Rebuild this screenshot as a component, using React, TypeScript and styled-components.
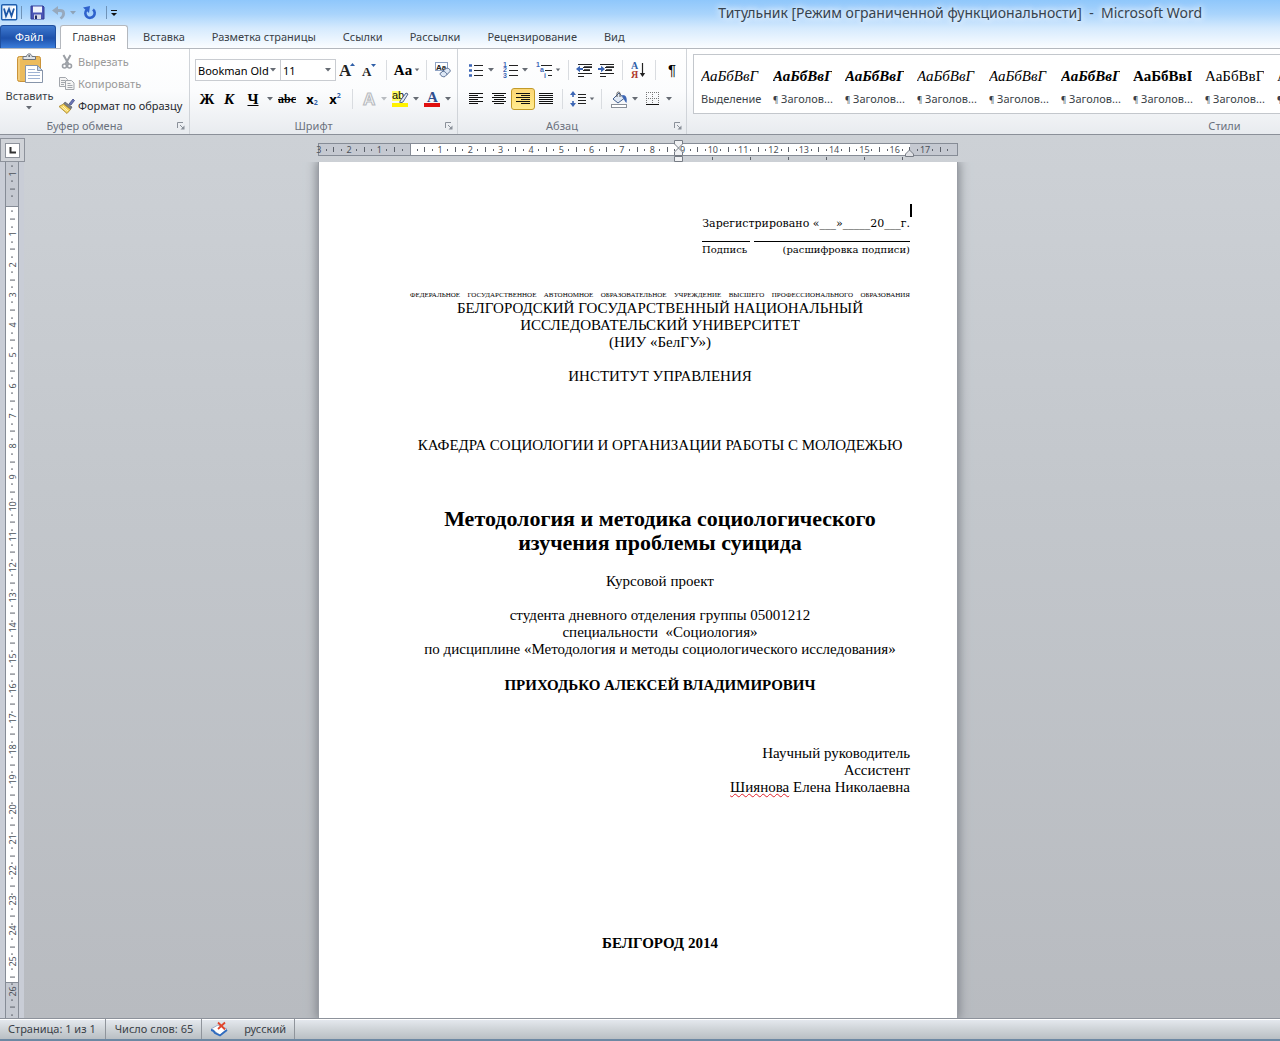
import React from 'react';
import styled, { createGlobalStyle, css } from 'styled-components';

const ui = '"Noto Sans", "Open Sans", sans-serif';
const serif = '"Liberation Serif", "Times New Roman", serif';
const wideSerif = '"DejaVu Serif", serif';

const GlobalStyle = createGlobalStyle`
  *, *::before, *::after { box-sizing: border-box; }
  body { margin: 0; background: #b9bcc1; font-family: ${ui}; font-size: 11px; color: #3a3f47; }
  button, select { font: inherit; color: inherit; margin: 0; padding: 0; border: 0; background: none; }
  p, h1, h2 { margin: 0; font-weight: normal; }
`;

const Window = styled.div`
  display: flex;
  flex-direction: column;
  height: 100vh;
  overflow: hidden;
`;

/* ---------- Title bar and tabs ---------- */

const Header = styled.header`
  background: linear-gradient(#8fc7fb 0, #a9d4fc 14px, #d5eafd 28px, #fbfdff 48px);
`;

const TitleBar = styled.div`
  display: flex;
  align-items: center;
  height: 25px;
`;

const QuickAccess = styled.div`
  display: flex;
  align-items: center;
  height: 22px;
  padding-left: 1px;
`;

const QuickButton = styled.button<{ $w: number }>`
  display: flex;
  align-items: center;
  justify-content: center;
  width: ${(p) => p.$w}px;
  height: 20px;
`;

const QuickDivider = styled.span`
  width: 1px;
  height: 13px;
  margin: 0 3px;
  background: #6f93b8;
`;

const WindowTitle = styled.h1`
  margin-left: auto;
  margin-right: 78px;
  font-size: 14px;
  line-height: 25px;
  color: #36434f;
  white-space: pre;
  text-shadow: 0 0 6px #fff, 0 0 8px #fff;
`;

const Tabs = styled.nav`
  display: flex;
  align-items: flex-end;
  height: 24px;
  border-bottom: 1px solid #b4b8be;
`;

const Tab = styled.button<{ $kind?: 'file' | 'active' }>`
  height: 23px;
  padding: 0 13px 0 14px;
  line-height: 22px;
  white-space: nowrap;
  ${(p) =>
    p.$kind === 'file' &&
    css`
      width: 56px;
      margin-right: 4px;
      color: #fff;
      border: 1px solid #1f4f9f;
      border-bottom: 0;
      border-radius: 3px 3px 0 0;
      background: linear-gradient(#3f7ad0, #1d51ab 55%, #3b7ddb);
    `}
  ${(p) =>
    p.$kind === 'active' &&
    css`
      height: 24px;
      width: 68px;
      padding: 0 0 2px;
      margin-right: 1px;
      margin-bottom: -1px;
      border: 1px solid #b4b8be;
      border-bottom: 0;
      border-radius: 3px 3px 0 0;
      background: #fff;
    `}
`;

/* ---------- Ribbon ---------- */

const Ribbon = styled.div`
  display: flex;
  flex: none;
  height: 86px;
  overflow: hidden;
  background: linear-gradient(#fff, #fbfcfd 50%, #e8ebef);
  border-bottom: 1px solid #8b9099;
`;

const Group = styled.section<{ $w: number }>`
  display: flex;
  flex: none;
  flex-direction: column;
  width: ${(p) => p.$w}px;
  padding-top: 4px;
  border-right: 1px solid #d0d4d9;
`;

const GroupBody = styled.div<{ $row?: boolean }>`
  display: flex;
  flex: 1;
  min-height: 0;
  flex-direction: ${(p) => (p.$row ? 'row' : 'column')};
  gap: ${(p) => (p.$row ? 0 : 5)}px;
  padding-top: ${(p) => (p.$row ? 0 : 5)}px;
`;

const GroupFooter = styled.div`
  display: flex;
  flex: none;
  align-items: center;
  height: 17px;
  color: #6a717d;
`;

const GroupName = styled.h2`
  flex: 1;
  font-size: 11px;
  line-height: 16px;
  text-align: center;
`;

const Launcher = styled.button`
  display: flex;
  width: 20px;
  padding-left: 8px;
`;

const ToolRow = styled.div<{ $inset: number }>`
  display: flex;
  align-items: center;
  height: 24px;
  padding-left: ${(p) => p.$inset}px;
`;

const Tool = styled.button<{ $w?: number; $on?: boolean; $after?: number }>`
  display: flex;
  flex: none;
  align-items: center;
  justify-content: space-between;
  width: ${(p) => p.$w ?? 22}px;
  height: 24px;
  margin-right: ${(p) => p.$after ?? 0}px;
  color: #000;
  ${(p) =>
    p.$on &&
    css`
      height: 22px;
      border: 1px solid #c29b29;
      border-radius: 3px;
      background: linear-gradient(#fbd677, #ffe37e 60%, #ffeb94);
    `}
`;

const Glyph = styled.span`
  display: flex;
  flex: 1 0 22px;
  max-width: 26px;
  align-items: center;
  justify-content: center;
`;

const ToolDivider = styled.span<{ $w: number }>`
  flex: none;
  width: ${(p) => p.$w}px;
  height: 20px;
  background: linear-gradient(#d9dce0, #d9dce0) center / 1px 100% no-repeat;
`;

const Letter = styled.span<{ $italic?: boolean; $line?: string; $size?: number }>`
  font-family: ${serif};
  font-weight: bold;
  font-size: ${(p) => p.$size ?? 15}px;
  line-height: 16px;
  font-style: ${(p) => (p.$italic ? 'italic' : 'normal')};
  text-decoration: ${(p) => p.$line ?? 'none'};
`;

const Pilcrow = styled.span`
  font-family: "Liberation Sans", sans-serif;
  font-size: 15px;
  line-height: 16px;
`;

const Script = styled.span<{ $up?: boolean }>`
  display: flex;
  align-items: ${(p) => (p.$up ? 'flex-start' : 'flex-end')};
  height: 14px;
  font-weight: bold;
  font-size: 13px;
  line-height: 14px;

  small {
    font-size: 7px;
    line-height: 7px;
    color: #2f5fa8;
  }
`;

const Combo = styled.label<{ $w: number }>`
  display: flex;
  align-items: center;
  width: ${(p) => p.$w}px;
  height: 22px;
  padding-right: 3px;
  border: 1px solid #c9ccd1;
  background: #fff;
  color: #000;

  & + & { border-left: 0; }

  select {
    flex: 1;
    min-width: 0;
    height: 20px;
    padding-left: 2px;
    appearance: none;
    text-overflow: clip;
    outline: 0;
  }
`;

const PasteButton = styled.button`
  display: flex;
  flex-direction: column;
  align-items: center;
  width: 59px;
  line-height: 15px;
  gap: 4px;
`;

const PasteLabel = styled.span`
  display: flex;
  flex-direction: column;
  align-items: center;
  gap: 3px;
`;

const ClipList = styled.div`
  display: flex;
  flex-direction: column;
`;

const ClipButton = styled.button<{ $dim?: boolean }>`
  display: flex;
  flex: none;
  align-items: center;
  gap: 3px;
  height: 22px;
  padding-bottom: 5px;
  white-space: nowrap;
  color: ${(p) => (p.$dim ? '#9a9a9a' : '#26292e')};
`;

const Gallery = styled.div`
  display: flex;
  height: 60px;
  margin: 1px 0 0 6px;
  border: 1px solid #c3c7cc;
  background: #fff;
`;

const StyleCard = styled.button`
  display: flex;
  flex: none;
  flex-direction: column;
  width: 72px;
  padding: 11px 6px 0 7px;
  text-align: left;
`;

const StyleSample = styled.span<{ $bold?: boolean; $italic?: boolean }>`
  width: 59px;
  overflow: hidden;
  white-space: nowrap;
  font-family: ${serif};
  font-size: 15px;
  line-height: 20px;
  font-weight: ${(p) => (p.$bold ? 'bold' : 'normal')};
  font-style: ${(p) => (p.$italic ? 'italic' : 'normal')};
  color: #000;
`;

const StyleName = styled.span`
  padding-top: 5px;
  line-height: 16px;
  white-space: nowrap;

  small { font-size: 8px; }
`;

/* ---------- Workspace ---------- */

const Workspace = styled.main`
  display: grid;
  flex: 1;
  min-height: 0;
  grid-template-columns: 26px 1fr 30px;
  grid-template-rows: 27px 1fr;
  overflow: hidden;
  background: linear-gradient(to right, #c9cdd6 24px, transparent 24px),
    linear-gradient(#cdd1d6, #c3c7cc 40%, #b8bbc0);
`;

const Corner = styled.div`
  padding-top: 3px;
`;

const TabStop = styled.button`
  display: flex;
  align-items: center;
  justify-content: center;
  width: 25px;
  height: 24px;
  border: 1px solid #8d929b;
  background: #d0d3d8;

  span {
    display: flex;
    align-items: center;
    justify-content: center;
    width: 15px;
    height: 15px;
    border: 1px solid #8d929b;
    background: #fff;
  }
`;

const RulerLane = styled.div`
  display: flex;
  justify-content: center;
  padding-top: 8px;
`;

const HRuler = styled.div`
  position: relative;
  display: flex;
  width: 640px;
  height: 13px;
  border: 1px solid #868c96;
  background: linear-gradient(to right, #c5c9d1 91px, #868c96 91px, #868c96 92px, #fff 92px, #fff 591px, #c5c9d1 591px);
`;

const HMarks = styled.div`
  display: flex;
  flex: 1;
  align-items: center;
  margin: 0 5px 0 -4px;
`;

const VRuler = styled.div`
  display: flex;
  width: 14px;
  height: 100%;
  margin-left: 5px;
  border: solid #868c96;
  border-width: 0 1px;
  background: linear-gradient(#c5c9d1 44px, #868c96 44px, #868c96 45px, #fff 45px, #fff 820px, #868c96 820px, #868c96 821px, #c5c9d1 821px);
`;

const VMarks = styled.div`
  display: flex;
  flex: 1;
  flex-direction: column;
  align-items: center;
`;

const Mark = styled.span<{ $vertical?: boolean }>`
  display: flex;
  flex: 1 1 0;
  min-width: 0;
  min-height: 0;
  align-items: center;
  justify-content: center;
  font-size: 9px;
  line-height: 11px;
  color: #4d525a;
  ${(p) => p.$vertical && css`
    writing-mode: vertical-rl;
    transform: rotate(180deg);
  `}
`;

const Tick = styled.i<{ $long?: boolean; $vertical?: boolean }>`
  flex: none;
  background: #5d626b;
  width: ${(p) => (p.$vertical ? (p.$long ? 5 : 2) : 1)}px;
  height: ${(p) => (p.$vertical ? 1 : p.$long ? 5 : 2)}px;
`;

const IndentMark = styled.svg<{ $left: number; $top: number }>`
  position: absolute;
  left: ${(p) => p.$left}px;
  top: ${(p) => p.$top}px;
`;

const DefaultStops = styled.div`
  position: absolute;
  left: 393px;
  top: 13px;
  display: flex;
  gap: 37px;

  i { width: 1px; height: 3px; background: #5d626b; }
`;

const PageLane = styled.div`
  display: flex;
  justify-content: center;
  overflow: hidden;
`;

const Page = styled.article`
  width: 638px;
  padding: 42px 47px 0 91px;
  background: #fff;
  box-shadow: 0 0 0 1px #9a9ea5, 0 0 10px 2px #7c8087;
  font-family: ${serif};
  font-size: 15px;
  line-height: 17px;
  color: #000;
  text-align: center;
`;

const Registration = styled.div`
  display: flex;
  flex-direction: column;
  align-items: flex-end;
  font-family: ${wideSerif};
  font-size: 11px;
  line-height: 14px;
`;

const Caret = styled.span`
  width: 2px;
  height: 13px;
  margin-right: -2px;
  background: #000;
`;

const SignatureTable = styled.div`
  display: grid;
  grid-template-columns: 48px 156px;
  column-gap: 4px;
  font-size: 10px;
  line-height: 13px;
`;

const SignatureCell = styled.span<{ $end?: boolean }>`
  display: flex;
  justify-content: ${(p) => (p.$end ? 'flex-end' : 'flex-start')};
  margin-top: 10px;
  border-top: 1px solid #000;
  padding-top: 1px;
  white-space: nowrap;
`;

const Ministry = styled.p`
  margin-top: 35px;
  font-size: 7px;
  line-height: 9px;
  text-align-last: justify;
  white-space: nowrap;
`;

const Para = styled.p<{ $before?: number; $bold?: boolean; $right?: boolean }>`
  margin-top: ${(p) => p.$before ?? 0}px;
  font-weight: ${(p) => (p.$bold ? 'bold' : 'normal')};
  text-align: ${(p) => (p.$right ? 'right' : 'center')};
  white-space: pre-line;
`;

const WorkTitle = styled.h1`
  margin-top: 53px;
  font-size: 22px;
  line-height: 24px;
  font-weight: bold;
  white-space: pre-line;
`;

const Misspelled = styled.span`
  text-decoration: underline wavy #e0202a 1px;
  text-underline-offset: 1px;
`;

/* ---------- Status bar ---------- */

const StatusBar = styled.footer`
  display: flex;
  flex: none;
  height: 23px;
  border-top: 1px solid #8d929b;
  border-bottom: 2px solid #6d88a3;
  box-shadow: inset 0 1px #fff;
  background: linear-gradient(#e6eaf0, #cfd4d8 50%, #b9bfc4);
`;

const StatusItem = styled.button<{ $left: number; $right: number; $bare?: boolean }>`
  display: flex;
  align-items: center;
  padding: 0 ${(p) => p.$right}px 1px ${(p) => p.$left}px;
  border-right: ${(p) => (p.$bare ? '0' : '1px solid #8f949b')};
  white-space: nowrap;
`;

/* ---------- Icons ---------- */

const Arrow = ({ color = '#666b73' }: { color?: string }) => (
  <svg width="8" height="4" viewBox="0 0 8 4"><path d="M1 0h6L4 3.5z" fill={color} /></svg>
);

const WordLogo = () => (
  <svg width="17" height="17" viewBox="0 0 17 17">
    <rect x=".7" y=".7" width="15" height="15" rx="1" fill="#eaf3fd" stroke="#1f5fae" strokeWidth="1.400" />
    <path d="M11 2.500h4v12h-4z" fill="#fff" />
    <path d="M3 4.500l2 7.500 3-7 2.500 7 2.500-7.500" fill="none" stroke="#1c57a6" strokeWidth="1.800" />
  </svg>
);

const SaveIcon = () => (
  <svg width="15" height="15" viewBox="0 0 15 15">
    <path d="M1 1h12l1 1v12H1z" fill="#4a55b5" stroke="#323c94" />
    <rect x="3" y="1.500" width="9" height="6" fill="#eef2fb" />
    <rect x="4" y="9.500" width="7" height="4.500" fill="#d8dbe8" />
    <rect x="5" y="10.500" width="2" height="3.500" fill="#222b66" />
  </svg>
);

const UndoIcon = () => (
  <svg width="14" height="14" viewBox="0 0 14 14">
    <path d="M3 4.500h5c5 0 4.500 5 .5 8" fill="none" stroke="#97a9bd" strokeWidth="2.800" />
    <path d="M0 4.500L6 0v9z" fill="#97a9bd" />
  </svg>
);

const RedoIcon = () => (
  <svg width="14" height="14" viewBox="0 0 14 14">
    <path d="M10 3.500a4.700 4.700 0 1 1-6.500.5" fill="none" stroke="#2f62cc" strokeWidth="2.600" />
    <path d="M0 1.500L7 0 6 7z" fill="#2f62cc" />
  </svg>
);

const PasteIcon = () => (
  <svg width="28" height="31" viewBox="0 0 28 31">
    <rect x="1.500" y="3.500" width="23" height="25" rx="2" fill="#ecbb5c" stroke="#c9933a" />
    <path d="M3 27V5h8" fill="none" stroke="#f8dc9b" />
    <path d="M7 6.500V3.500h3.500c.5-3.500 5-3.500 5.500 0h3.500v3z" fill="#dfe3e8" stroke="#6c747f" />
    <circle cx="13.200" cy="3" r="1" fill="#5d6672" />
    <path d="M9.500 12.500h12l5 5v12h-17z" fill="#fff" stroke="#8795aa" />
    <path d="M21.500 12.500v5h5z" fill="#c8d8ee" stroke="#8795aa" />
    <path d="M12 16.500h7M12 19.500h12M12 22.500h12M12 25.500h12" stroke="#9fb3d3" />
  </svg>
);

const CutIcon = () => (
  <svg width="16" height="16" viewBox="0 0 16 16" fill="none" stroke="#9b9fa5">
    <path d="M4.500 1l5 9M11.500 1l-5 9" strokeWidth="2" />
    <circle cx="5.500" cy="12" r="2" strokeWidth="1.600" />
    <circle cx="10.500" cy="12" r="2" strokeWidth="1.600" />
  </svg>
);

const CopyIcon = () => (
  <svg width="16" height="16" viewBox="0 0 16 16" fill="#f4f4f4" stroke="#a2a6ac">
    <path d="M.5 1.500h6l2 2v7h-8z" />
    <path d="M2 4.500h4M2 6.500h4M2 8.500h3" />
    <path d="M6.500 4.500h6l2.500 2.500v6.500H6.500z" />
    <path d="M8.500 7.500h3M8.500 9.500h5M8.500 11.500h5" />
  </svg>
);

const BrushIcon = () => (
  <svg width="16" height="16" viewBox="0 0 16 16">
    <path d="M10 6l4-5 1.500 1.500L12 7z" fill="#6c78b8" stroke="#414a86" strokeWidth=".8" />
    <path d="M6 4L13 9l-1.500 2.500L4.500 6z" fill="#7b7f86" stroke="#4b4f55" strokeWidth=".6" />
    <path d="M4.500 6l7 5.500L8 15.500 0 8.500z" fill="#f3d25c" stroke="#a5822a" strokeWidth=".8" />
    <path d="M4 8l5 5M2.500 9l5 4" stroke="#fff3b8" />
  </svg>
);

const LauncherIcon = () => (
  <svg width="8" height="8" viewBox="0 0 8 8" fill="none" stroke="#8a9099">
    <path d="M.5 6V.5H6" />
    <path d="M3 3l3 3" />
    <path d="M7.500 3.500v4h-4z" fill="#8a9099" stroke="none" />
  </svg>
);

const ResizeFont = ({ down }: { down?: boolean }) => (
  <svg width="16" height="18" viewBox="0 0 16 18">
    <text x={down ? 1 : 0} y="15" fontFamily="Liberation Serif" fontWeight="bold" fontSize={down ? 13 : 17} fill="#222">A</text>
    <path d={down ? 'M10 3h5l-2.500 3z' : 'M11 5h5l-2.500-3z'} fill="#2f5fa8" />
  </svg>
);

const ClearFormat = () => (
  <svg width="18" height="18" viewBox="0 0 18 18">
    <rect x="1.500" y="1.500" width="12" height="8" fill="#fff" stroke="#8fa3c4" />
    <text x="2" y="9" fontFamily="Liberation Sans" fontWeight="bold" fontSize="8" fill="#222">Aa</text>
    <path d="M6 12.500l6-5c2-1 5 1 4 3l-5 5c-2 1-5-1-5-3z" fill="#dde8f6" stroke="#50688f" />
    <path d="M9 10c2 .5 3.500 2 4 3.500" fill="none" stroke="#50688f" />
  </svg>
);

const OutlineA = () => (
  <svg width="18" height="18" viewBox="0 0 18 18">
    <text x="3" y="15" fontFamily="Liberation Sans" fontWeight="bold" fontSize="17" fill="#fff" stroke="#b9bcc1" strokeWidth="1.200">A</text>
  </svg>
);

const Highlighter = () => (
  <svg width="18" height="18" viewBox="0 0 18 18">
    <rect x="1" y="1" width="9" height="10" fill="#ffff66" />
    <text x="1" y="9" fontFamily="Liberation Sans" fontSize="11" fill="#111">ab</text>
    <path d="M9 11l6-8 2 1-5 8-3 1z" fill="#dfe7f3" stroke="#3f567d" strokeWidth=".9" />
    <rect x="1" y="13" width="16" height="4" fill="#fff200" />
  </svg>
);

const FontColor = () => (
  <svg width="18" height="18" viewBox="0 0 18 18">
    <text x="4" y="12" fontFamily="Liberation Serif" fontWeight="bold" fontSize="15" fill="#2f4f8f">A</text>
    <rect x="1" y="13" width="16" height="4" fill="#e01010" />
  </svg>
);

const BulletList = () => (
  <svg width="14" height="14" viewBox="0 0 14 14">
    <path d="M5 2.500h9M5 7.500h9M5 12.500h9" stroke="#222" />
    <path d="M0 2.500h3M0 7.500h3M0 12.500h3" stroke="#3c66b5" strokeWidth="2.400" />
  </svg>
);

const NumberList = () => (
  <svg width="15" height="16" viewBox="0 0 15 16">
    <path d="M6 3.500h9M6 8.500h9M6 13.500h9" stroke="#222" />
    <g fontFamily="Liberation Sans" fontWeight="bold" fontSize="7" fill="#3c66b5">
      <text x="0" y="5">1</text><text x="0" y="10">2</text><text x="0" y="16">3</text>
    </g>
  </svg>
);

const LevelList = () => (
  <svg width="17" height="16" viewBox="0 0 17 16">
    <path d="M5 3.500h11M9 8.500h7M12 13.500h4" stroke="#222" />
    <g fontFamily="Liberation Sans" fontWeight="bold" fontSize="7" fill="#3c66b5">
      <text x="0" y="5">1</text><text x="4" y="10">a</text><text x="8" y="16">i</text>
    </g>
  </svg>
);

const IndentIcon = ({ right }: { right?: boolean }) => (
  <svg width="16" height="14" viewBox="0 0 16 14">
    <path d="M2 1.500h14M7 4.500h9M7 7.500h7M2 10.500h14M2 13.500h6" stroke="#222" />
    <path d="M8 4h8M8 7h6" stroke="#222" strokeWidth="1.500" />
    <path d={right ? 'M0 6h4' : 'M3 6h4'} stroke="#3c66b5" strokeWidth="2" />
    <path d={right ? 'M3 2.800v6.400L7 6z' : 'M4 2.800v6.400L0 6z'} fill="#3c66b5" />
  </svg>
);

const SortIcon = () => (
  <svg width="15" height="18" viewBox="0 0 15 18">
    <g fontFamily="Liberation Serif" fontWeight="bold" fontSize="10">
      <text x="0" y="8" fill="#2f5fa8">А</text>
      <text x="0" y="17" fill="#b03a2e">Я</text>
    </g>
    <path d="M11.500 2v12" stroke="#222" strokeWidth="1.200" />
    <path d="M8.800 12h5.400l-2.700 4z" fill="#222" />
  </svg>
);

const alignPaths = {
  left: 'M0 1.500h14M0 3.500h9M0 5.500h14M0 7.500h9M0 9.500h14M0 11.500h9',
  center: 'M0 1.500h14M2 3.500h10M0 5.500h14M2 7.500h10M0 9.500h14M2 11.500h10',
  right: 'M0 1.500h14M5 3.500h9M0 5.500h14M5 7.500h9M0 9.500h14M5 11.500h9',
  justify: 'M0 1.500h14M0 3.500h14M0 5.500h14M0 7.500h14M0 9.500h14M0 11.500h14',
};

const AlignIcon = ({ kind }: { kind: keyof typeof alignPaths }) => (
  <svg width="14" height="14" viewBox="0 0 14 14"><path d={alignPaths[kind]} stroke="#111" /></svg>
);

const SpacingIcon = () => (
  <svg width="16" height="16" viewBox="0 0 16 16">
    <path d="M8 3.500h8M8 6.500h8M8 9.500h8M8 12.500h8" stroke="#222" />
    <path d="M3 2v4M3 10v4" stroke="#3c66b5" strokeWidth="1.600" />
    <path d="M0 4l3-4 3 4zM0 12l3 4 3-4z" fill="#3c66b5" />
  </svg>
);

const FillIcon = () => (
  <svg width="18" height="17" viewBox="0 0 18 17">
    <path d="M3 8l6-6 5 5.500-6 4.500z" fill="#e2eaf5" stroke="#44608f" />
    <path d="M7 6V2.500C7 .5 10 .5 10 2.500V6" fill="none" stroke="#555" />
    <path d="M12 4c4-.5 5.500 3 4.500 8-1.500-1-2-3-3-4.500z" fill="#3c66b5" />
    <rect x="1.500" y="13.500" width="15" height="3" fill="#fff" stroke="#8a9099" />
  </svg>
);

const BorderIcon = () => (
  <svg width="14" height="14" viewBox="0 0 14 14">
    <path d="M.5 0v13M6.500 0v13M12.500 0v13M0 .5h13M0 6.500h13" stroke="#777" strokeDasharray="1 1" />
    <path d="M0 12.500h13" stroke="#111" />
  </svg>
);

const ProofIcon = () => (
  <svg width="18" height="16" viewBox="0 0 18 16">
    <path d="M1 8l7-4 9 4-7 6z" fill="#fff" stroke="#8aa0c0" strokeWidth=".8" />
    <path d="M1 9c2 0 3 1 4 3l5 2.500L17 9" fill="none" stroke="#2f6cc0" strokeWidth="1.800" />
    <path d="M8 1.500l7 7M15 1.500l-7 6.500" stroke="#e0452c" strokeWidth="1.800" />
  </svg>
);

/* ---------- Data ---------- */

const tabs = ['Вставка', 'Разметка страницы', 'Ссылки', 'Рассылки', 'Рецензирование', 'Вид'];

const styleCards = [
  { italic: true },
  { heading: true, italic: true, bold: true },
  { heading: true, italic: true, bold: true },
  { heading: true, italic: true },
  { heading: true, italic: true },
  { heading: true, italic: true, bold: true },
  { heading: true, bold: true },
  { heading: true },
  { heading: true },
];

const Marks = ({ start, count, vertical }: { start: number; count: number; vertical?: boolean }) => (
  <>
    {Array.from({ length: count }, (_, i) => {
      const quarter = start + i;
      const whole = quarter % 4 === 0;
      return (
        <Mark key={i} $vertical={vertical}>
          {whole ? (quarter === 0 ? null : Math.abs(quarter / 4)) : <Tick $vertical={vertical} $long={quarter % 2 === 0} />}
        </Mark>
      );
    })}
  </>
);

const Split = ({ label, w, after, dim, children }: { label: string; w: number; after?: number; dim?: boolean; children: React.ReactNode }) => (
  <Tool aria-label={label} $w={w} $after={after}>
    <Glyph>{children}</Glyph>
    <Arrow color={dim ? '#b9bcc1' : undefined} />
  </Tool>
);

const Single = ({ label, w, on, children }: { label: string; w?: number; on?: boolean; children: React.ReactNode }) => (
  <Tool aria-label={label} $w={w} $on={on}><Glyph>{children}</Glyph></Tool>
);

const Footer = ({ name }: { name: string }) => (
  <GroupFooter>
    <GroupName>{name}</GroupName>
    <Launcher aria-label={name}><LauncherIcon /></Launcher>
  </GroupFooter>
);

export default function App() {
  return (
    <Window>
      <GlobalStyle />
      <Header>
        <TitleBar>
          <QuickAccess>
            <WordLogo />
            <QuickDivider />
            <QuickButton $w={24} aria-label="Сохранить"><SaveIcon /></QuickButton>
            <QuickButton $w={20} aria-label="Отменить"><UndoIcon /></QuickButton>
            <QuickButton $w={8} aria-label="Список отмены"><Arrow color="#8ea3b8" /></QuickButton>
            <QuickButton $w={26} aria-label="Повторить"><RedoIcon /></QuickButton>
            <QuickDivider />
            <QuickButton $w={8} aria-label="Настройка панели">
              <svg width="8" height="8" viewBox="0 0 8 8"><path d="M1 1.500h6" stroke="#111" /><path d="M1 4h6L4 7z" fill="#111" /></svg>
            </QuickButton>
          </QuickAccess>
          <WindowTitle>{'Титульник [Режим ограниченной функциональности]  -  Microsoft Word'}</WindowTitle>
        </TitleBar>
        <Tabs>
          <Tab $kind="file">Файл</Tab>
          <Tab $kind="active">Главная</Tab>
          {tabs.map((t) => <Tab key={t}>{t}</Tab>)}
        </Tabs>
      </Header>

      <Ribbon>
        <Group $w={190}>
          <GroupBody $row>
            <PasteButton>
              <PasteIcon />
              <PasteLabel>Вставить<Arrow /></PasteLabel>
            </PasteButton>
            <ClipList>
              <ClipButton $dim><CutIcon />Вырезать</ClipButton>
              <ClipButton $dim><CopyIcon />Копировать</ClipButton>
              <ClipButton><BrushIcon />Формат по образцу</ClipButton>
            </ClipList>
          </GroupBody>
          <Footer name="Буфер обмена" />
        </Group>

        <Group $w={268}>
          <GroupBody>
            <ToolRow $inset={5}>
              <Combo $w={86}>
                <select aria-label="Шрифт"><option>Bookman Old Style</option></select>
                <Arrow />
              </Combo>
              <Combo $w={55}>
                <select aria-label="Размер шрифта"><option>11</option></select>
                <Arrow />
              </Combo>
              <Single label="Увеличить размер"><ResizeFont /></Single>
              <Single label="Уменьшить размер"><ResizeFont down /></Single>
              <ToolDivider $w={12} />
              <Split label="Регистр" w={28}><Letter>Aa</Letter></Split>
              <ToolDivider $w={12} />
              <Single label="Очистить формат"><ClearFormat /></Single>
            </ToolRow>
            <ToolRow $inset={6}>
              <Single label="Полужирный"><Letter>Ж</Letter></Single>
              <Single label="Курсив"><Letter $italic>К</Letter></Single>
              <Split label="Подчеркнутый" w={34}><Letter $line="underline">Ч</Letter></Split>
              <Single label="Зачеркнутый" w={26}><Letter $line="line-through" $size={12}>abc</Letter></Single>
              <Single label="Подстрочный знак" w={24}><Script>x<small>2</small></Script></Single>
              <Single label="Надстрочный знак"><Script $up>x<small>2</small></Script></Single>
              <ToolDivider $w={12} />
              <Split label="Эффекты текста" w={30} dim><OutlineA /></Split>
              <Split label="Цвет выделения" w={32}><Highlighter /></Split>
              <Split label="Цвет текста" w={32}><FontColor /></Split>
            </ToolRow>
          </GroupBody>
          <Footer name="Шрифт" />
        </Group>

        <Group $w={229}>
          <GroupBody>
            <ToolRow $inset={7}>
              <Split label="Маркеры" w={30} after={4}><BulletList /></Split>
              <Split label="Нумерация" w={30} after={4}><NumberList /></Split>
              <Split label="Многоуровневый список" w={28} after={2}><LevelList /></Split>
              <ToolDivider $w={10} />
              <Single label="Уменьшить отступ"><IndentIcon /></Single>
              <Single label="Увеличить отступ"><IndentIcon right /></Single>
              <ToolDivider $w={10} />
              <Single label="Сортировка"><SortIcon /></Single>
              <ToolDivider $w={12} />
              <Single label="Отобразить все знаки"><Pilcrow>¶</Pilcrow></Single>
            </ToolRow>
            <ToolRow $inset={7}>
              <Single label="По левому краю"><AlignIcon kind="left" /></Single>
              <Single label="По центру" w={24}><AlignIcon kind="center" /></Single>
              <Single label="По правому краю" w={24} on><AlignIcon kind="right" /></Single>
              <Single label="По ширине"><AlignIcon kind="justify" /></Single>
              <ToolDivider $w={10} />
              <Split label="Интервал" w={28}><SpacingIcon /></Split>
              <ToolDivider $w={12} />
              <Split label="Заливка" w={32} after={2}><FillIcon /></Split>
              <Split label="Границы" w={32}><BorderIcon /></Split>
            </ToolRow>
          </GroupBody>
          <Footer name="Абзац" />
        </Group>

        <Group $w={1096}>
          <GroupBody $row>
            <Gallery>
              {styleCards.map((c, i) => (
                <StyleCard key={i}>
                  <StyleSample $bold={c.bold} $italic={c.italic}>АаБбВвГ</StyleSample>
                  <StyleName>{c.heading ? <><small>¶</small> Заголов...</> : 'Выделение'}</StyleName>
                </StyleCard>
              ))}
            </Gallery>
          </GroupBody>
          <Footer name="Стили" />
        </Group>
      </Ribbon>

      <Workspace>
        <Corner>
          <TabStop aria-label="Табуляция">
            <span><svg width="7" height="7" viewBox="0 0 7 7"><path d="M1.500 0v5.500H7" fill="none" stroke="#333" strokeWidth="2" /></svg></span>
          </TabStop>
        </Corner>
        <RulerLane>
          <HRuler>
            <HMarks><Marks start={-12} count={84} /></HMarks>
            <IndentMark $left={355} $top={-4} width="9" height="22" viewBox="0 0 9 22">
              <path d="M.5.5h8V4l-4 4-4-4zM.5 15.500V12l4-4 4 4v3.500zM.5 16.500h8v5h-8z" fill="#f1f2f4" stroke="#777c85" />
            </IndentMark>
            <IndentMark $left={586} $top={5} width="9" height="8" viewBox="0 0 9 8">
              <path d="M.5 7.500V5l4-4 4 4v2.500z" fill="#dfe1e5" stroke="#777c85" />
            </IndentMark>
            <DefaultStops><i /><i /><i /><i /><i /><i /></DefaultStops>
          </HRuler>
        </RulerLane>
        <span />
        <VRuler><VMarks><Marks start={-5} count={113} vertical /></VMarks></VRuler>
        <PageLane>
          <Page>
            <Registration>
              <Caret />
              <p>Зарегистрировано «___»_____20___г.</p>
              <SignatureTable>
                <SignatureCell>Подпись</SignatureCell>
                <SignatureCell $end>(расшифровка подписи)</SignatureCell>
              </SignatureTable>
            </Registration>
            <Ministry>ФЕДЕРАЛЬНОЕ ГОСУДАРСТВЕННОЕ АВТОНОМНОЕ ОБРАЗОВАТЕЛЬНОЕ УЧРЕЖДЕНИЕ ВЫСШЕГО ПРОФЕССИОНАЛЬНОГО ОБРАЗОВАНИЯ</Ministry>
            <Para>{'БЕЛГОРОДСКИЙ ГОСУДАРСТВЕННЫЙ НАЦИОНАЛЬНЫЙ\nИССЛЕДОВАТЕЛЬСКИЙ УНИВЕРСИТЕТ\n(НИУ «БелГУ»)'}</Para>
            <Para $before={17}>ИНСТИТУТ УПРАВЛЕНИЯ</Para>
            <Para $before={52}>КАФЕДРА СОЦИОЛОГИИ И ОРГАНИЗАЦИИ РАБОТЫ С МОЛОДЕЖЬЮ</Para>
            <WorkTitle>{'Методология и методика социологического\nизучения проблемы суицида'}</WorkTitle>
            <Para $before={18}>Курсовой проект</Para>
            <Para $before={17}>{'студента дневного отделения группы 05001212\nспециальности \u00a0«Социология»\nпо дисциплине «Методология и методы социологического исследования»'}</Para>
            <Para $before={19} $bold>ПРИХОДЬКО АЛЕКСЕЙ ВЛАДИМИРОВИЧ</Para>
            <Para $before={51} $right>{'Научный руководитель\nАссистент\n'}<Misspelled>Шиянова</Misspelled> Елена Николаевна</Para>
            <Para $before={139} $bold>БЕЛГОРОД 2014</Para>
          </Page>
        </PageLane>
      </Workspace>

      <StatusBar>
        <StatusItem $left={8} $right={9}>Страница: 1 из 1</StatusItem>
        <StatusItem $left={9} $right={8}>Число слов: 65</StatusItem>
        <StatusItem $left={8} $right={8} $bare aria-label="Правописание"><ProofIcon /></StatusItem>
        <StatusItem $left={8} $right={8}>русский</StatusItem>
      </StatusBar>
    </Window>
  );
}
